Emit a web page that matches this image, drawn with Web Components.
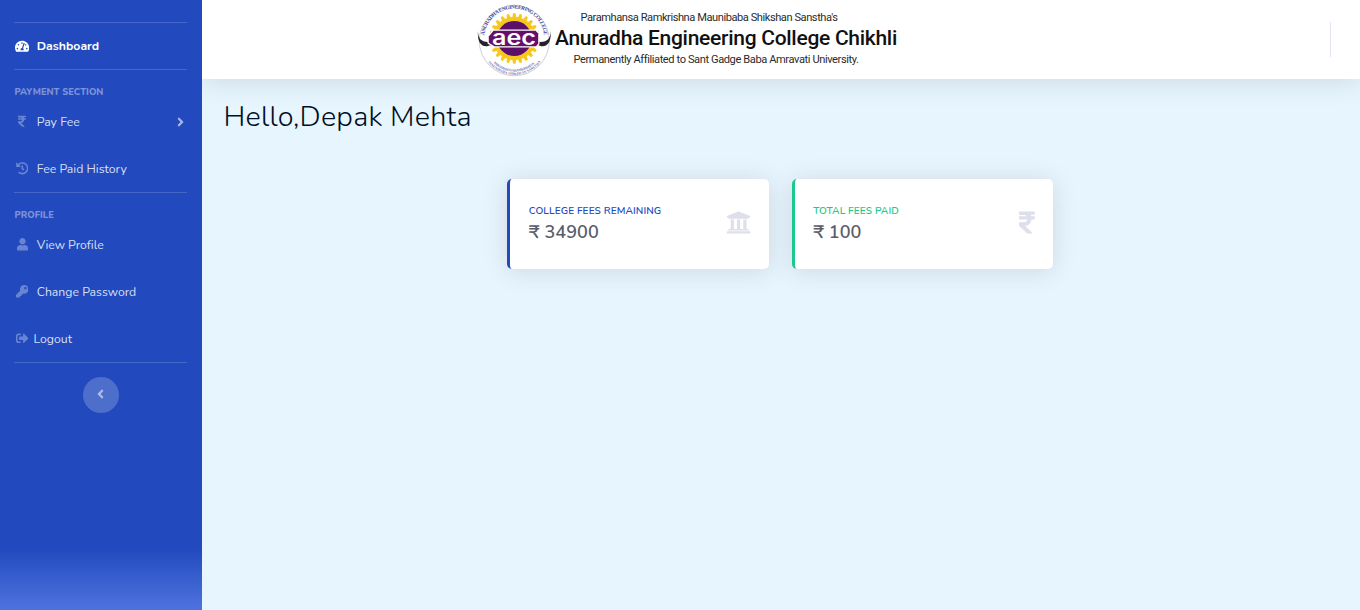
<!DOCTYPE html>
<html lang="en">
<head>
<meta charset="utf-8">
<title>Dashboard</title>
<style>
html,body{margin:0;height:100%}
body{font-family:Nunito,Lato,"Noto Sans",sans-serif;background:#e7f5ff;overflow:hidden}
</style>
</head>
<body>
<fee-dashboard></fee-dashboard>
<script>
const ICONS = {
  gauge:[576,'M288 32C128.94 32 0 160.94 0 320c0 52.8 14.25 102.26 39.06 144.8 5.61 9.62 16.3 15.2 27.44 15.2h443c11.14 0 21.83-5.58 27.44-15.2C561.75 422.26 576 372.8 576 320c0-159.06-128.94-288-288-288zm0 64c14.71 0 26.58 10.13 30.32 23.65-1.11 2.26-2.64 4.23-3.45 6.67l-9.22 27.67c-5.13 3.49-10.97 6.01-17.64 6.01-17.67 0-32-14.33-32-32S270.33 96 288 96zM96 384c-17.67 0-32-14.33-32-32s14.33-32 32-32 32 14.33 32 32-14.33 32-32 32zm48-160c-17.67 0-32-14.33-32-32s14.33-32 32-32 32 14.33 32 32-14.33 32-32 32zm246.77-72.41l-61.33 184C343.13 347.33 352 364.54 352 384c0 11.72-3.38 22.55-8.88 32H232.88c-5.5-9.45-8.88-20.28-8.88-32 0-33.94 26.5-61.43 59.9-63.59l61.34-184.01c4.17-12.56 17.73-19.45 30.36-15.17 12.57 4.19 19.35 17.79 15.17 30.36zm14.66 57.2l15.52-46.55c3.47-1.29 7.13-2.23 11.05-2.23 17.67 0 32 14.33 32 32s-14.33 32-32 32c-11.38-.01-20.89-6.28-26.57-15.22zM480 384c-17.67 0-32-14.33-32-32s14.33-32 32-32 32 14.33 32 32-14.33 32-32 32z'],
  rupee:[320,'M308 96c6.627 0 12-5.373 12-12V44c0-6.627-5.373-12-12-12H12C5.373 32 0 37.373 0 44v44.748c0 6.627 5.373 12 12 12h85.28c27.308 0 48.261 9.958 60.97 27.252H12c-6.627 0-12 5.373-12 12v40c0 6.627 5.373 12 12 12h158.757c-6.217 36.086-32.961 58.632-74.757 58.632H12c-6.627 0-12 5.373-12 12v53.012c0 3.349 1.4 6.546 3.861 8.818l165.052 152.356a12.001 12.001 0 0 0 8.139 3.182h82.562c10.924 0 16.166-13.408 8.139-20.818L116.871 319.906c76.499-2.34 131.144-53.395 138.318-127.906H308c6.627 0 12-5.373 12-12v-40c0-6.627-5.373-12-12-12h-58.69c-3.486-11.541-8.28-22.246-14.252-32H308z'],
  history:[512,'M504 255.531c.253 136.64-111.18 248.372-247.82 248.468-59.015.042-113.223-20.53-155.822-54.911-11.077-8.94-11.905-25.541-1.839-35.607l11.267-11.267c8.609-8.609 22.353-9.551 31.891-1.984C173.062 425.135 212.781 440 256 440c101.705 0 184-82.311 184-184 0-101.705-82.311-184-184-184-48.814 0-93.149 18.969-126.068 49.932l50.754 50.754c10.08 10.08 2.941 27.314-11.313 27.314H24c-8.837 0-16-7.163-16-16V38.627c0-14.254 17.234-21.393 27.314-11.314l49.372 49.372C129.209 34.136 189.552 8 256 8c136.81 0 247.747 110.78 248 247.531zm-180.912 78.784l9.823-12.63c8.138-10.463 6.253-25.542-4.21-33.679L288 256.349V152c0-13.255-10.745-24-24-24h-16c-13.255 0-24 10.745-24 24v135.651l65.409 50.874c10.463 8.137 25.541 6.253 33.679-4.21z'],
  user:[448,'M224 256c70.7 0 128-57.3 128-128S294.7 0 224 0 96 57.3 96 128s57.3 128 128 128zm89.6 32h-16.7c-22.2 10.2-46.9 16-72.9 16s-50.6-5.8-72.9-16h-16.7C60.2 288 0 348.2 0 422.4V464c0 26.5 21.5 48 48 48h352c26.5 0 48-21.5 48-48v-41.6c0-74.2-60.2-134.4-134.4-134.4z'],
  key:[512,'M512 176.001C512 273.203 433.202 352 336 352c-11.22 0-22.19-1.062-32.827-3.069l-24.012 27.014A23.999 23.999 0 0 1 261.223 384H224v40c0 13.255-10.745 24-24 24h-40v40c0 13.255-10.745 24-24 24H24c-13.255 0-24-10.745-24-24v-78.059c0-6.365 2.529-12.47 7.029-16.971l161.802-161.802C163.108 213.814 160 195.271 160 176 160 78.798 238.797.001 335.999 0 433.488-.001 512 78.511 512 176.001zM336 128c0 26.51 21.49 48 48 48s48-21.49 48-48-21.49-48-48-48-48 21.49-48 48z'],
  logout:[512,'M497 273L329 441c-15 15-41 4.5-41-17v-96H152c-13.3 0-24-10.7-24-24v-96c0-13.3 10.7-24 24-24h136V88c0-21.4 25.9-32 41-17l168 168c9.3 9.4 9.3 24.6 0 34zM192 436v-40c0-6.6-5.4-12-12-12H96c-17.7 0-32-14.3-32-32V160c0-17.7 14.3-32 32-32h84c6.6 0 12-5.4 12-12V76c0-6.6-5.4-12-12-12H96c-53 0-96 43-96 96v192c0 53 43 96 96 96h84c6.6 0 12-5.4 12-12z'],
  bank:[512,'M496 128v16a8 8 0 0 1-8 8h-24v12c0 6.627-5.373 12-12 12H60c-6.627 0-12-5.373-12-12v-12H24a8 8 0 0 1-8-8v-16a8 8 0 0 1 4.941-7.392l232-88a7.996 7.996 0 0 1 6.118 0l232 88A8 8 0 0 1 496 128zm-24 304H40c-13.255 0-24 10.745-24 24v16a8 8 0 0 0 8 8h464a8 8 0 0 0 8-8v-16c0-13.255-10.745-24-24-24zM96 192v192H60c-6.627 0-12 5.373-12 12v20h416v-20c0-6.627-5.373-12-12-12h-36V192h-64v192h-64V192h-64v192h-64V192H96z'],
  right:[256,'M224.3 273l-136 136c-9.4 9.4-24.6 9.4-33.9 0l-22.6-22.6c-9.4-9.4-9.4-24.6 0-33.9l96.4-96.4-96.4-96.4c-9.4-9.4-9.4-24.6 0-33.9L54.3 103c9.4-9.4 24.6-9.4 33.9 0l136 136c9.5 9.4 9.5 24.6.1 34z'],
  left:[256,'M31.7 239l136-136c9.4-9.4 24.6-9.4 33.9 0l22.6 22.6c9.4 9.4 9.4 24.6 0 33.9L127.9 256l96.4 96.4c9.4 9.4 9.4 24.6 0 33.9L201.7 409c-9.4 9.4-24.6 9.4-33.9 0l-136-136c-9.5-9.4-9.5-24.6-.1-34z']
};
class Base extends HTMLElement {
  connectedCallback() {
    if (!this.shadowRoot) this.attachShadow({mode:'open'}).innerHTML = this.render();
    this.ready && this.ready();
  }
  a(n, d='') { return this.getAttribute(n) ?? d; }
}
customElements.define('ui-icon', class extends Base {
  render() {
    const [w,d] = ICONS[this.a('name')];
    return `<style>:host{display:inline-flex;flex:none;justify-content:center;align-items:center}svg{display:block;height:1em;width:${w/512}em;fill:currentColor}</style><svg viewBox="0 0 ${w} 512"><path d="${d}"/></svg>`;
  }
});
/* A single line of text tracked to a given measure. */
customElements.define('ui-line', class extends Base {
  render() { return `<style>:host{display:block;white-space:nowrap}span{display:inline-block}</style><span><slot></slot></span>`; }
  ready() {
    const s = this.shadowRoot.querySelector('span'), want = +this.a('measure'), n = this.textContent.length;
    s.style.letterSpacing = '0px';
    s.style.letterSpacing = (want - s.getBoundingClientRect().width) / (n - 1) + 'px';
  }
});
customElements.define('nav-item', class extends Base {
  render() {
    return `<style>
    :host{display:flex;align-items:center;height:47px;padding:0 14.4px;box-sizing:border-box;color:rgba(255,255,255,.84);font-size:12.24px;line-height:18px}
    :host([active]){color:#fff;font-weight:700}
    .i{width:15.3px;font-size:12.6px;color:rgba(255,255,255,.32);margin-right:${this.a('gap','7')}px}
    :host([active]) .i{color:#fff}
    .c{margin:0 4px 0 auto;font-size:14px;color:rgba(255,255,255,.6)}
    </style><ui-icon class="i" name="${this.a('icon')}"></ui-icon><ui-line measure="${this.a('measure')}">${this.a('label')}</ui-line>${this.hasAttribute('more')?'<ui-icon class="c" name="right"></ui-icon>':''}`;
  }
});
customElements.define('nav-heading', class extends Base {
  render() {
    return `<style>:host{display:block;padding:0 14.4px;height:14px;font-size:9.36px;line-height:14px;font-weight:800;color:rgba(255,255,255,.42)}</style><ui-line measure="${this.a('measure')}"><slot></slot></ui-line>`;
  }
  ready() {
    const l = this.shadowRoot.querySelector('ui-line');
    l.textContent = this.textContent; l.ready();
  }
});
customElements.define('side-bar', class extends Base {
  render() {
    return `<style>
    :host{display:block;position:relative;z-index:1;width:202px;flex:none;height:610px;box-sizing:border-box;padding-top:22px;background:linear-gradient(180deg,#224abe 0,#224abe 548px,#4e73df 610px)}
    hr{margin:0 15px 0 14px;border:0;height:1px;background:rgba(255,255,255,.16)}
    nav-heading{margin-top:15px}
    button{display:flex;align-items:center;justify-content:center;width:36px;height:36px;margin:14px auto 0;padding:0 2px 2px 0;border:0;border-radius:50%;background:rgba(255,255,255,.2);color:rgba(255,255,255,.55);font-size:14px}
    .p1{margin-top:-1px}
    </style><hr>
    <nav-item active icon="gauge" label="Dashboard" measure="62.5" style="height:46px"></nav-item><hr>
    <nav-heading measure="89">PAYMENT SECTION</nav-heading>
    <nav-item icon="rupee" label="Pay Fee" measure="43" more class="p1"></nav-item>
    <nav-item icon="history" label="Fee Paid History" measure="90"></nav-item><hr>
    <nav-heading measure="39.5">PROFILE</nav-heading>
    <nav-item icon="user" label="View Profile" measure="67" class="p1"></nav-item>
    <nav-item icon="key" label="Change Password" measure="99.5"></nav-item>
    <nav-item icon="logout" label="Logout" measure="38.5" gap="3.8"></nav-item><hr>
    <button aria-label="Collapse"><ui-icon name="left"></ui-icon></button>`;
  }
});
customElements.define('college-seal', class extends Base {
  render() {
    let pts = [];
    const N = 24;
    for (let i=0;i<N;i++) for (const [o,r] of [[-.34,21.6],[-.18,25.2],[.18,25.2],[.34,21.6]]) {
      const t = (i+o)/N*Math.PI*2; pts.push((37.3+r*Math.sin(t)).toFixed(2)+','+(34.5-r*Math.cos(t)).toFixed(2));
    }
    return `<style>:host{display:block;width:74px;height:74px;flex:none}svg{display:block;overflow:visible}</style>
    <svg width="74" height="74" viewBox="0 0 74 74">
    <circle cx="37.3" cy="36.8" r="35" fill="#fff" stroke="#c9c9d3" stroke-width=".9"/>
    <polygon points="${pts.join(' ')}" fill="#f6c81e"/>
    <circle cx="37.3" cy="34.5" r="17.5" fill="#5c0f68"/>
    <path id="top" d="M7.3 34.5A30 30 0 1 1 67.3 34.5" fill="none"/>
    <path id="bot" d="M10.3 50A29.5 29.5 0 0 0 64.3 50" fill="none"/>
    <path id="low" d="M8 53.5A33.4 33.4 0 0 0 66.6 53.5" fill="none"/>
    <g font-family="Liberation Serif,serif" font-weight="700" fill="#454596">
    <text font-size="5.4"><textPath href="#top" startOffset="3" textLength="88">ANURADHA ENGINEERING COLLEGE</textPath></text>
    <text font-size="3.5" fill="#7373ae"><textPath href="#bot" startOffset="11" textLength="45">PARAMHANSA RAMKRISHNA</textPath></text>
    <text font-size="3.5" fill="#7373ae"><textPath href="#low" startOffset="6" textLength="60">MAUNIBABA SHIKSHAN SANSTHA</textPath></text></g>
    <path d="M1 27C1 34 4 38 11 38L20 35.5V38.5L11 42C4 43.5 0 37 1 27ZM73.6 27C73.6 34 70.6 38 63.6 38L54.6 35.5V38.5L63.6 42C70.6 43.5 74.6 37 73.6 27Z" fill="#282129"/>
    <path d="M16 25.5H59L62.5 29V40L59.5 43.5H17L10.5 39.5V32Z" fill="#fff"/>
    <path d="M16.5 26.8H58.5L61.2 29.5V39.4L59 42.3H17.5L11.8 38.8V32.5Z" fill="#64106b"/>
    <text x="15" y="40.8" font-family="Inter,sans-serif" font-size="20.5" font-weight="600" textLength="44" lengthAdjust="spacingAndGlyphs" fill="#fff">aec</text>
    </svg>`;
  }
});
customElements.define('top-bar', class extends Base {
  render() {
    return `<style>
    :host{display:flex;height:79px;background:#fff;box-shadow:0 2px 25px rgba(58,59,69,.15);position:relative;box-sizing:border-box;padding-left:275px;font-family:Roboto,sans-serif;color:#2b2b2b}
    college-seal{margin-top:4px}
    .t{display:flex;flex-direction:column;margin-left:4px;padding-top:10px;width:344px}
    .a{font-size:11.1px;line-height:15px;margin-left:25.5px}
    .b{font-size:21px;line-height:26px;font-weight:500;color:#111}
    .c{font-size:11.1px;line-height:15px;margin-left:18.5px;margin-top:1px}
    i{display:block;width:1px;height:35px;background:#e3e6f0;margin:22px 29px 0 auto}
    </style><college-seal></college-seal><div class="t">
    <ui-line class="a" measure="257.5">Paramhansa Ramkrishna Maunibaba Shikshan Sanstha's</ui-line>
    <ui-line class="b" measure="342.3">Anuradha Engineering College Chikhli</ui-line>
    <ui-line class="c" measure="284.5">Permanently Affiliated to Sant Gadge Baba Amravati University.</ui-line></div><i></i>`;
  }
});
customElements.define('stat-card', class extends Base {
  render() {
    return `<style>
    :host{display:flex;align-items:center;justify-content:space-between;box-sizing:border-box;height:90px;background:#fff;border-left:3.6px solid var(--accent);border-radius:5px;box-shadow:0 0 0 .4px #e3e6f0,0 2px 25px rgba(58,59,69,.15);padding:0 18px}
    .l{font-size:10.08px;line-height:14px;font-weight:600;color:var(--accent)}
    .v{font-size:18px;line-height:22px;margin-top:3px;font-weight:650;color:#5a5c69}
    .t{margin:-2px 0 0 .7px}
    ui-icon{font-size:25.2px;color:#dddfeb;margin-top:-2px}
    </style><div class="t"><ui-line class="l" measure="${this.a('lm')}">${this.a('label')}</ui-line><ui-line class="v" measure="${this.a('vm')}">${this.a('value')}</ui-line></div><ui-icon name="${this.a('icon')}"></ui-icon>`;
  }
});
customElements.define('fee-dashboard', class extends Base {
  render() {
    return `<style>
    :host{display:flex;width:1360px;height:610px;overflow:hidden}
    main{flex:1;min-width:0;background:#e7f5ff}
    h1{margin:20px 0 0 21.5px;font-size:28.8px;line-height:36px;font-weight:350;color:#000f24}
    .cards{display:grid;grid-template-columns:262px 261px;gap:22.6px;margin:44px 0 0 305px}
    </style><side-bar></side-bar><main><top-bar></top-bar>
    <h1><ui-line measure="248">Hello,Depak Mehta</ui-line></h1>
    <div class="cards"><stat-card style="--accent:#224abe" label="COLLEGE FEES REMAINING" lm="132.5" value="₹ 34900" vm="70" icon="bank"></stat-card>
    <stat-card style="--accent:#1cc88a" label="TOTAL FEES PAID" lm="85.5" value="₹ 100" vm="48" icon="rupee"></stat-card></div></main>`;
  }
});
</script>
</body>
</html>
